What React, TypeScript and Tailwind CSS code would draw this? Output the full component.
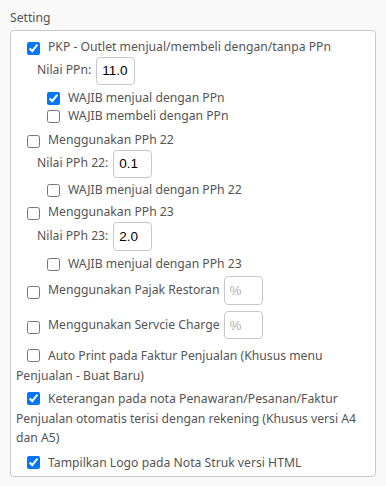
import React from "react";

const font = { fontFamily: '"Noto Sans", "Open Sans", sans-serif' };

function Cb({ checked, className = "" }: { checked?: boolean; className?: string }) {
  return (
    <input
      type="checkbox"
      defaultChecked={checked}
      className={`m-0 h-[13px] w-[13px] shrink-0 align-[-2px] accent-[#0075ff] ${className}`}
    />
  );
}

function NumInput({ value, x }: { value?: string; x: string }) {
  return (
    <input
      type="text"
      defaultValue={value}
      placeholder="%"
      className={`h-[28px] w-[39px] rounded-[4px] border border-[#c8c8c8] bg-white px-[5px] text-[13.5px] text-black placeholder:text-[#b0b0b0] ${x}`}
      style={{ fontFamily: '"Liberation Sans", Arial, sans-serif' }}
    />
  );
}

export default function App() {
  return (
    <div className="h-[486px] w-[386px] bg-[#f9f9f9] text-[12.2px] text-[#555]" style={font}>
      <div className="px-[10px] pt-[9px] leading-[18px]">Setting</div>
      <div className="mx-[10px] mt-[3px] h-[447px] rounded-[4px] border border-[#c9c9c9] bg-white px-[5px] pt-[7px]">
        {/* PPn */}
        <div className="flex h-[19px] items-center">
          <Cb checked className="ml-[11px] mr-[8px] translate-y-[1px]" />
          <span>PKP - Outlet menjual/membeli dengan/tanpa PPn</span>
        </div>
        <div className="flex h-[27px] items-center">
          <span className="ml-[21px]">Nilai PPn:</span>
          <NumInput value="11.0" x="ml-[5px] h-[27px] w-[38px]" />
        </div>
        <div className="mt-[5px] flex h-[18px] items-center">
          <Cb checked className="ml-[31px] mr-[8px]" />
          <span>WAJIB menjual dengan PPn</span>
        </div>
        <div className="flex h-[18px] items-center">
          <Cb className="ml-[31px] mr-[8px]" />
          <span>WAJIB membeli dengan PPn</span>
        </div>

        {/* PPh 22 */}
        <div className="mt-[6px] flex h-[19px] items-center">
          <Cb className="ml-[11px] mr-[8px] translate-y-[1px]" />
          <span>Menggunakan PPh 22</span>
        </div>
        <div className="flex h-[27px] items-center">
          <span className="ml-[21px]">Nilai PPh 22:</span>
          <NumInput value="0.1" x="ml-[5px] h-[27px]" />
        </div>
        <div className="mt-[4px] flex h-[18px] items-center">
          <Cb className="ml-[31px] mr-[8px]" />
          <span>WAJIB menjual dengan PPh 22</span>
        </div>

        {/* PPh 23 */}
        <div className="mt-[4px] flex h-[19px] items-center">
          <Cb className="ml-[11px] mr-[8px] translate-y-[1px]" />
          <span>Menggunakan PPh 23</span>
        </div>
        <div className="flex h-[29px] items-center">
          <span className="ml-[21px]">Nilai PPh 23:</span>
          <NumInput value="2.0" x="ml-[5px] h-[29px]" />
        </div>
        <div className="mt-[4px] flex h-[18px] items-center">
          <Cb className="ml-[31px] mr-[8px]" />
          <span>WAJIB menjual dengan PPh 23</span>
        </div>

        {/* Pajak & service */}
        <div className="mt-[3px] flex h-[29px] items-center">
          <Cb className="ml-[11px] mr-[8px] translate-y-[2px]" />
          <span>Menggunakan Pajak Restoran</span>
          <NumInput x="ml-[4px] h-[29px]" />
        </div>
        <div className="mt-[6px] flex h-[28px] items-center">
          <Cb className="ml-[11px] mr-[8px] translate-y-[2px]" />
          <span>Menggunakan Servcie Charge</span>
          <NumInput x="ml-[4px] h-[28px]" />
        </div>

        <p className="mt-[7px] leading-[19.5px]">
          <Cb className="ml-[11px] mr-[8px]" />
          Auto Print pada Faktur Penjualan (Khusus menu Penjualan - Buat Baru)
        </p>
        <p className="mt-[4px] leading-[19.5px]">
          <Cb checked className="ml-[11px] mr-[8px]" />
          Keterangan pada nota Penawaran/Pesanan/Faktur Penjualan otomatis terisi dengan rekening (Khusus versi A4 dan A5)
        </p>
        <p className="mt-[5px] leading-[19.5px]">
          <Cb checked className="ml-[11px] mr-[8px]" />
          Tampilkan Logo pada Nota Struk versi HTML
        </p>
      </div>
    </div>
  );
}
